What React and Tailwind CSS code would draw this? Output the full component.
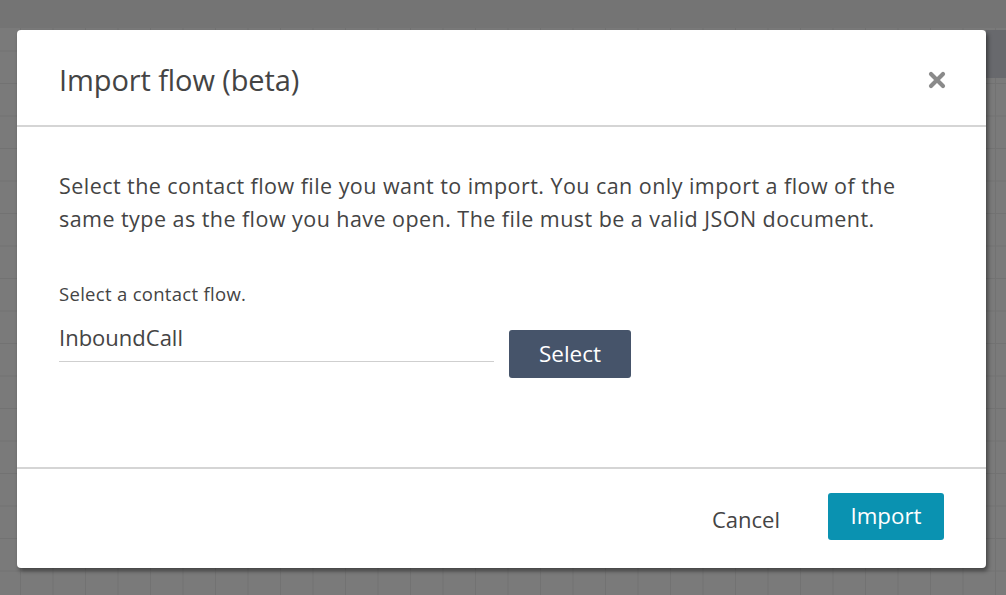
export default function App() {
  return (
    <div
      className="w-[1006px] h-[595px] overflow-hidden bg-[#7a7a7a] bg-[linear-gradient(to_right,#727272_1px,transparent_1px),linear-gradient(to_bottom,#727272_1px,transparent_1px)] bg-[size:32.5px_32.5px] bg-[position:20px_18px] relative"
      style={{ fontFamily: '"Open Sans", "Noto Sans", sans-serif' }}
    >
      {/* top bar behind the dialog */}
      <div className="absolute left-0 top-0 w-full h-[28px] bg-[#747474]" />
      <div className="absolute right-0 top-[30px] w-[20px] h-[48px] bg-[#68696d]" />

      <div className="absolute left-[17px] top-[30px] w-[969px] h-[538px] bg-white rounded-[4px] shadow-[2px_3px_4px_rgba(0,0,0,0.45)] flex flex-col text-[#444]">
        {/* header */}
        <div className="h-[97px] flex items-center justify-between pl-[42px] pr-[40px] border-b-2 border-[#d5d5d5]">
          <h1 className="text-[29px] leading-none tracking-[-0.1px] text-[#444] pt-[4px]">Import flow (beta)</h1>
          <svg width="18" height="18" viewBox="0 0 18 18" className="mt-[4px]">
            <path d="M3 3 L15 15 M15 3 L3 15" stroke="#8a8a8a" strokeWidth="4.2" strokeLinecap="round" />
          </svg>
        </div>

        {/* body */}
        <div className="flex-1 pl-[42px] pr-[40px] pt-[42px]">
          <p className="text-[21.5px] leading-[33px] tracking-[0.45px] text-[#444] whitespace-nowrap">
            Select the contact flow file you want to import. You can only import a flow of the
            <br />
            same type as the flow you have open. The file must be a valid JSON document.
          </p>
          <div className="mt-[47px] text-[18.5px] leading-[24px] tracking-[0.3px] text-[#444]">Select a contact flow.</div>
          <div className="flex items-start gap-[15px] mt-[18px]">
            <div className="w-[435px] border-b border-[#cfcfcf] pb-[11px] text-[22px] leading-[26px] text-[#444]">
              InboundCall
            </div>
            <button className="mt-[6px] w-[122px] h-[48px] rounded-[3px] bg-[#46546a] text-white text-[22.5px] leading-none">
              Select
            </button>
          </div>
        </div>

        {/* footer */}
        <div className="h-[101px] border-t-2 border-[#d5d5d5] flex items-center justify-end pr-[42px] gap-[48px]">
          <button className="text-[22px] text-[#444] mt-[2px]">Cancel</button>
          <button className="w-[116px] h-[47px] mb-[4px] rounded-[3px] bg-[#0a92b1] text-white text-[22.3px] leading-none">
            Import
          </button>
        </div>
      </div>
    </div>
  );
}
